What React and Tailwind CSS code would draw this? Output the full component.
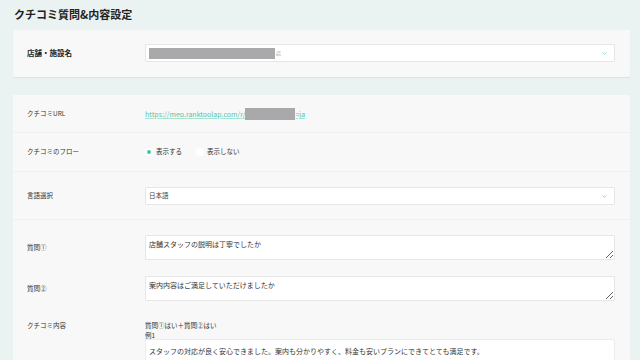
import { FiChevronDown } from 'react-icons/fi';

const font = { fontFamily: '"Noto Sans CJK JP", "Noto Sans", sans-serif' };

function Select({ children }) {
  return (
    <div className="flex h-[18px] flex-1 items-center justify-between rounded-[2px] border border-[#e6e6e6] bg-white pl-[3px] pr-[6px]">
      <div className="flex items-center text-[6.5px] text-[#555]">{children}</div>
      <FiChevronDown className="text-[#5fd3b5]" size={7} strokeWidth={2.5} />
    </div>
  );
}

function Area({ value }) {
  return (
    <textarea
      readOnly
      defaultValue={value}
      className="block h-[25px] flex-1 rounded-[2px] border border-[#e6e6e6] bg-white px-[3px] py-[3px] text-[7px] leading-[10px] text-[#333] outline-none"
      style={font}
    />
  );
}

export default function App() {
  return (
    <div className="min-h-[360px] w-[640px] overflow-hidden bg-[#eaf3f2] text-[#333]" style={font}>
      <h1 className="pl-[14px] pt-[6px] text-[11px] font-bold leading-[16px] text-[#222]">
        クチコミ質問&内容設定
      </h1>

      {/* store */}
      <div className="ml-[13px] mr-[10px] mt-[8px] flex items-center bg-[#f8f8f8] pb-[15px] pl-[14px] pr-[15px] pt-[14px] shadow-[0_1px_1px_rgba(0,0,0,0.05)]">
        <div className="w-[118px] text-[7.5px] font-bold text-[#222]">店舗・施設名</div>
        <Select>
          <span className="inline-block h-[11px] w-[126px] bg-[#a9a9ab]"></span>
          <span className="ml-[1px] text-[5px] text-[#999]">店</span>
        </Select>
      </div>

      {/* settings */}
      <div className="ml-[13px] mr-[10px] mt-[18px] bg-[#f8f8f8]">
        <div className="flex h-[38px] items-center border-b border-[#f0f0f0] pl-[14px] pt-[1px]">
          <div className="w-[118px] text-[6.5px] text-[#333]">クチコミURL</div>
          <div className="flex items-center text-[7px] text-[#52c5a8]">
            <span className="underline decoration-[#a8e2d2] decoration-[0.5px] underline-offset-1">https://meo.ranktoolap.com/r/</span>
            <span className="inline-block h-[12px] w-[50px] bg-[#a9a9ab]"></span>
            <span className="underline decoration-[#a8e2d2] decoration-[0.5px] underline-offset-1">=ja</span>
          </div>
        </div>

        <div className="flex h-[39px] items-center border-b border-[#f0f0f0] pl-[14px]">
          <div className="w-[118px] text-[6.5px] text-[#333]">クチコミのフロー</div>
          <div className="flex items-center gap-[3px] text-[6.5px]">
            <span className="flex h-[8px] w-[8px] items-center justify-center rounded-full bg-white">
              <span className="h-[4px] w-[4px] rounded-full bg-[#3cc8a0]"></span>
            </span>
            <span>表示する</span>
            <span className="ml-[11px] h-[8px] w-[8px] rounded-full bg-white"></span>
            <span>表示しない</span>
          </div>
        </div>

        <div className="flex items-center border-b border-[#f0f0f0] pb-[14px] pl-[14px] pr-[15px] pt-[15px]">
          <div className="w-[118px] text-[6.5px] text-[#333]">言語選択</div>
          <Select>
            <span className="text-[6.5px] text-[#444]">日本語</span>
          </Select>
        </div>

        <div className="flex items-center pl-[14px] pr-[15px] pt-[15px]">
          <div className="w-[118px] text-[6.5px] text-[#333]">質問①</div>
          <Area value="店舗スタッフの説明は丁寧でしたか" />
        </div>

        <div className="mt-[16px] flex items-center pl-[14px] pr-[15px]">
          <div className="w-[118px] text-[6.5px] text-[#333]">質問②</div>
          <Area value="案内内容はご満足していただけましたか" />
        </div>

        <div className="mt-[19px] flex items-start pl-[14px] pr-[15px]">
          <div className="w-[118px] text-[6.5px] leading-[11px] text-[#333]">クチコミ内容</div>
          <div className="flex-1">
            <div className="text-[6.5px] leading-[11px]">質問①はい＋質問②はい</div>
            <div className="text-[6.5px] leading-[8px]">例1</div>
            <div className="h-[30px] rounded-[2px] border border-[#ececec] bg-white px-[3px] pt-[6px] text-[7px] leading-[10px]">
              スタッフの対応が良く安心できました。案内も分かりやすく、料金も安いプランにできてとても満足です。
            </div>
          </div>
        </div>
      </div>
    </div>
  );
}
